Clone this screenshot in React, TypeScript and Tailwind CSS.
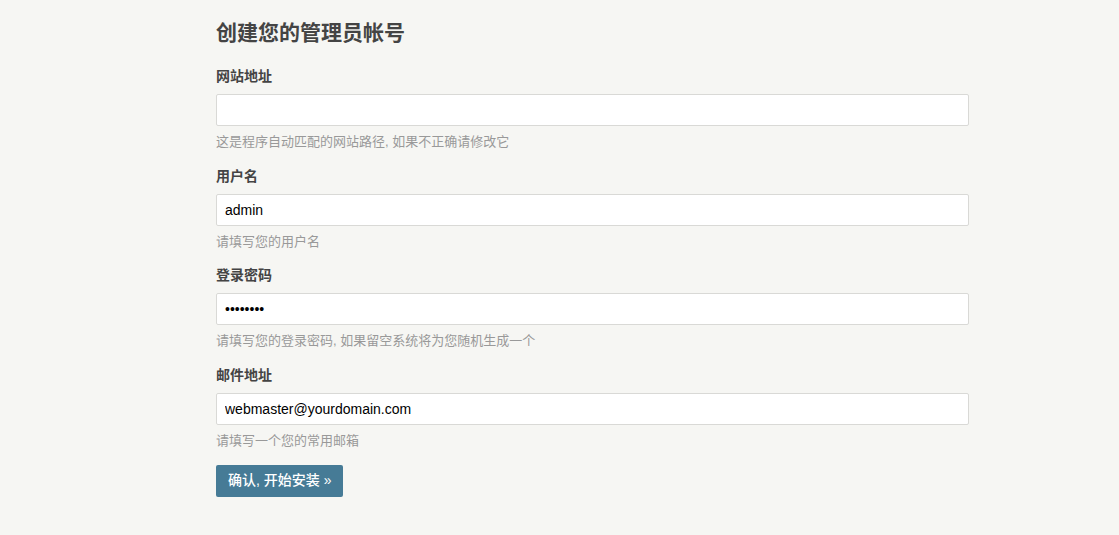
import React from 'react';

const font = { fontFamily: '"Liberation Sans", Arial, "Noto Sans CJK SC", sans-serif' };

interface IFieldProps {
  label: string;
  type?: string;
  value: string;
  hint: string;
}

function Field({ label, type = 'text', value, hint }: IFieldProps) {
  return (
    <div className="mb-[13.67px]">
      <label className="block text-[14px] leading-[20px] font-bold text-[#444] mb-2">{label}</label>
      <input
        type={type}
        defaultValue={value}
        className="block w-[753px] h-8 px-2 bg-white border border-[#d9d9d6] rounded-[2px] text-[14px] text-black outline-none"
      />
      <p className="mt-[6px] text-[13px] leading-[20px] text-[#999]">{hint}</p>
    </div>
  );
}

export default function App() {
  return (
    <div className="min-h-[535px] bg-[#f6f6f3] text-[#444]" style={font}>
      <div className="ml-[216px] w-[753px] pt-[18px]">
        <h2 className="text-[21px] leading-[30px] font-bold text-[#444] mb-[18px]">创建您的管理员帐号</h2>
        <Field label="网站地址" value="" hint="这是程序自动匹配的网站路径, 如果不正确请修改它" />
        <Field label="用户名" value="admin" hint="请填写您的用户名" />
        <Field label="登录密码" type="password" value="12345678" hint="请填写您的登录密码, 如果留空系统将为您随机生成一个" />
        <Field label="邮件地址" value="webmaster@yourdomain.com" hint="请填写一个您的常用邮箱" />
        <button className="h-8 px-3 bg-[#467b96] text-white text-[14px] font-medium rounded-[2px]">确认, 开始安装 »</button>
      </div>
    </div>
  );
}
